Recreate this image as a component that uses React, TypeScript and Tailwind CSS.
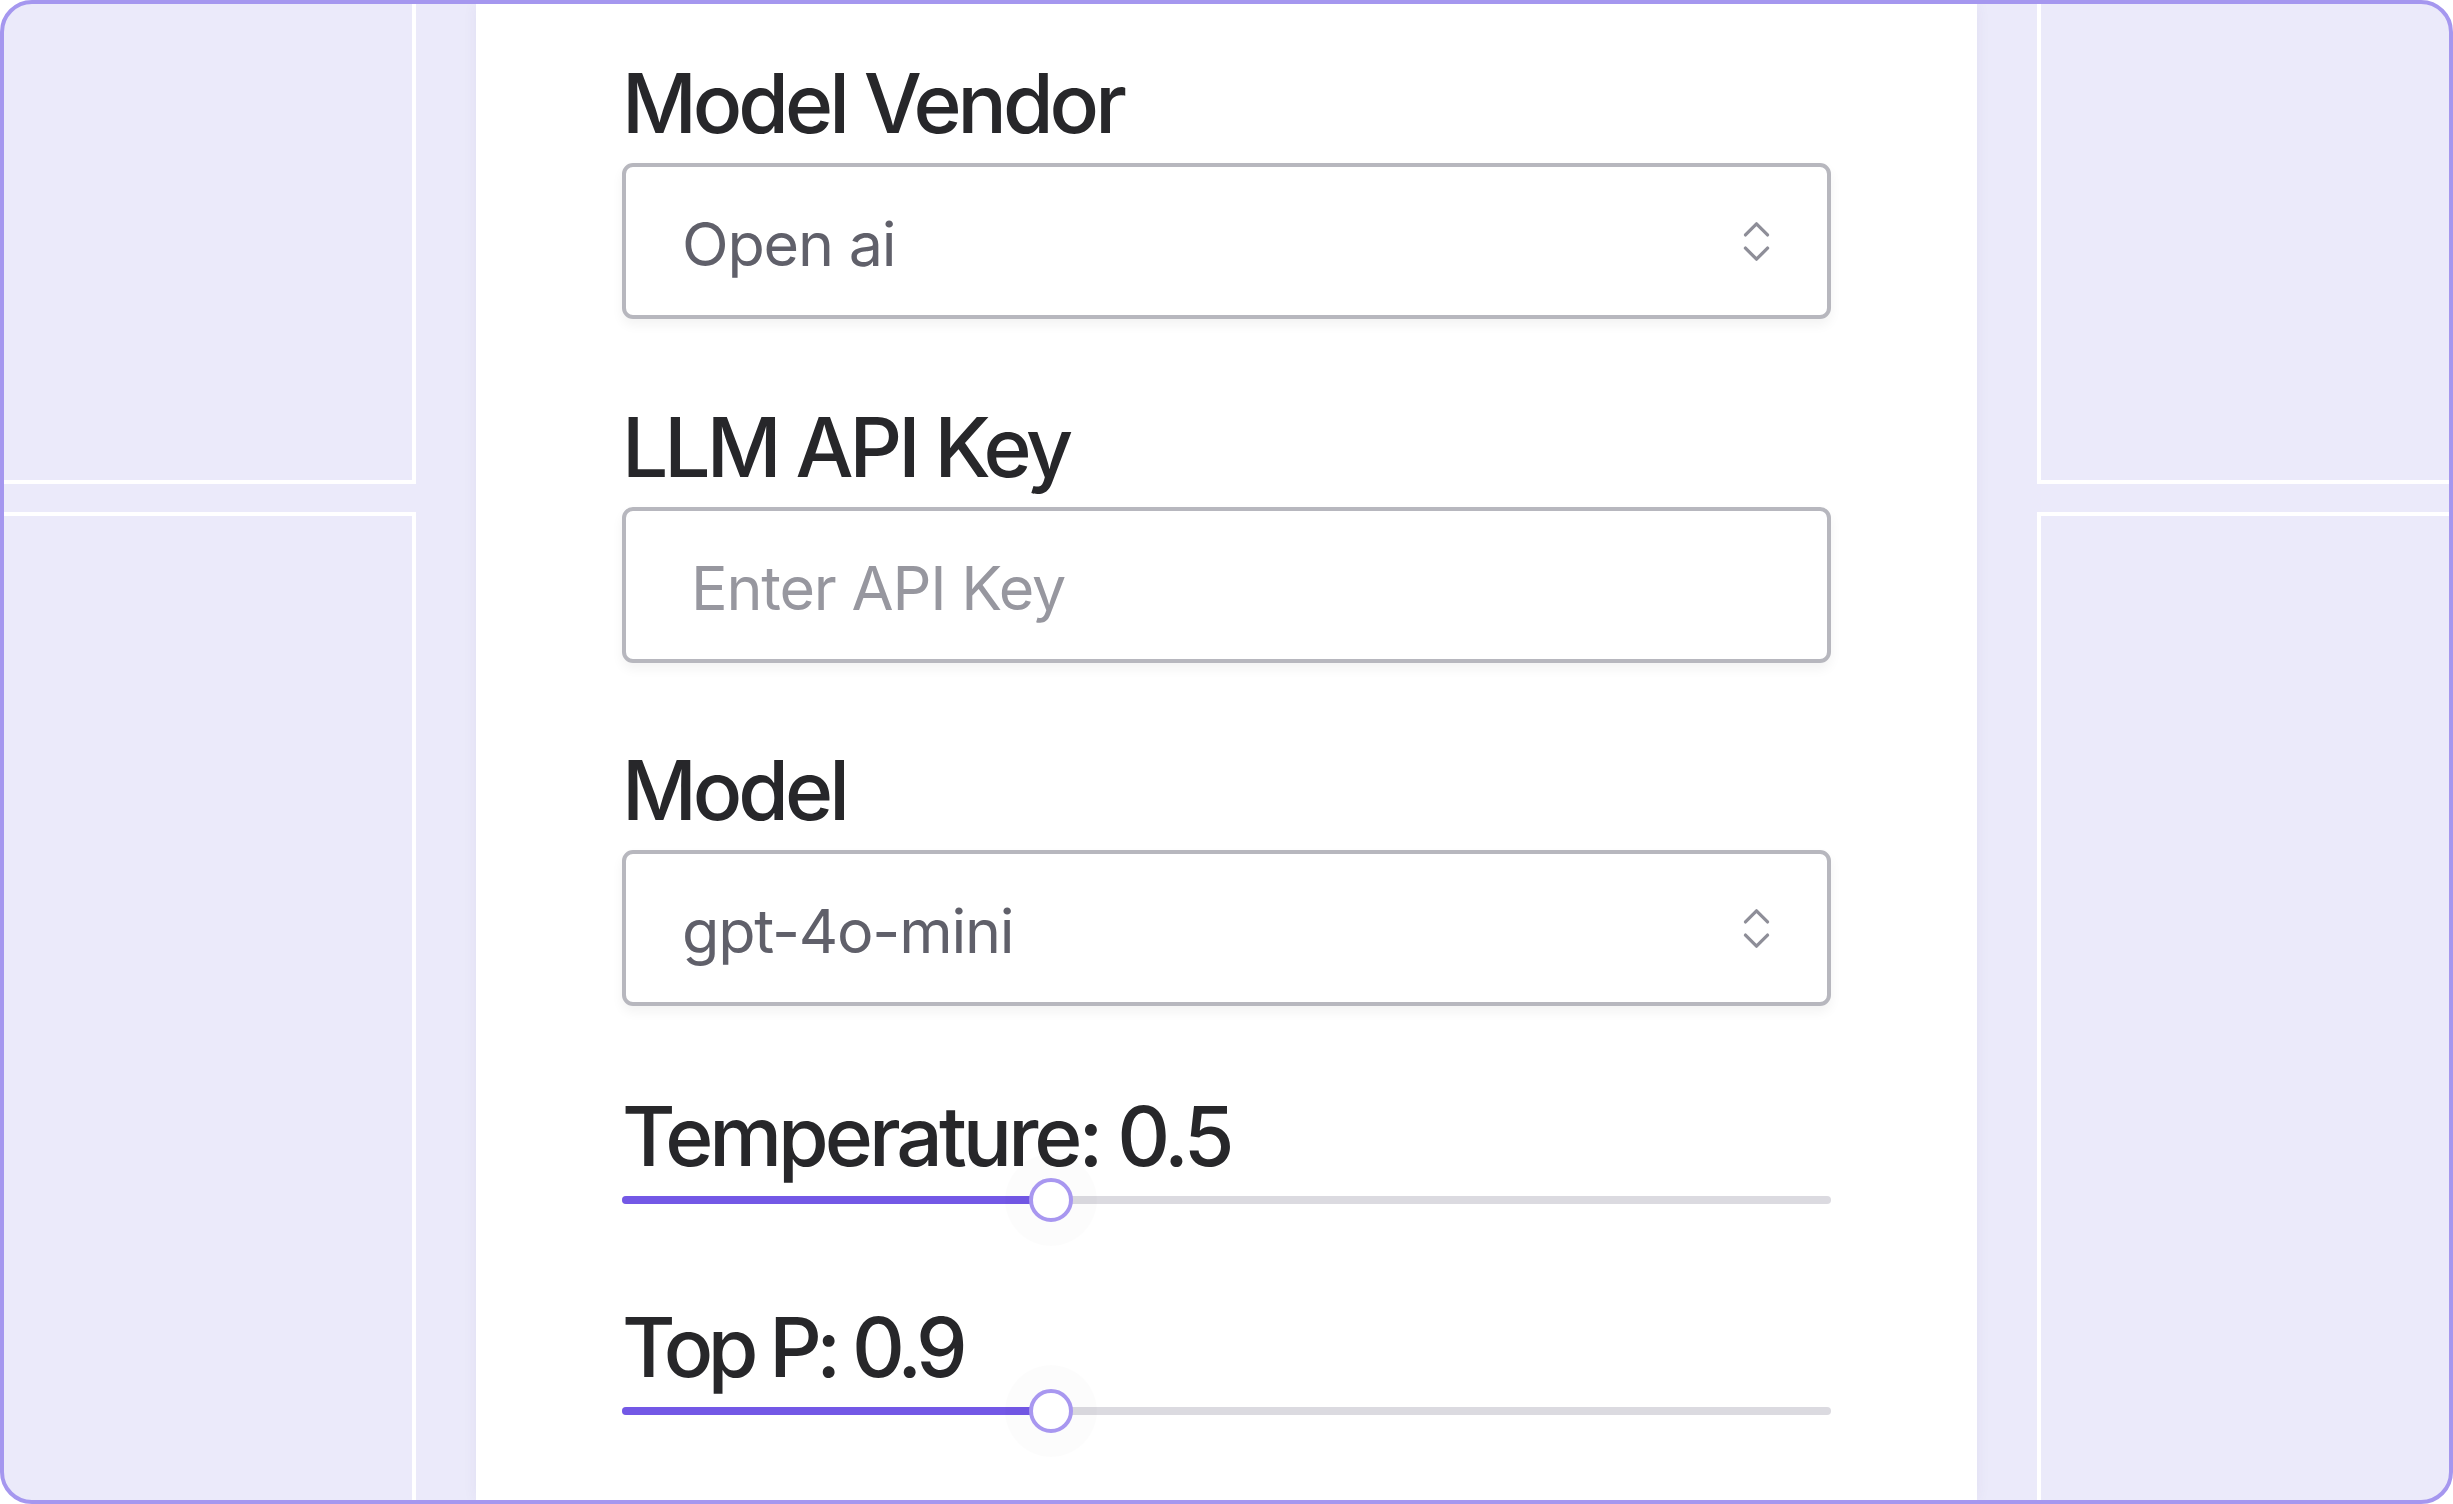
import React from "react";
import { ChevronsUpDown } from "lucide-react";

function Label({ children, tight }: { children: React.ReactNode; tight?: boolean }) {
  return (
    <div
      className={
        tight
          ? "text-[82px] leading-none font-medium text-[#27272a] tracking-[-5.5px] whitespace-nowrap"
          : "text-[82px] leading-none font-medium text-[#27272a] tracking-[-4px] whitespace-nowrap"
      }
    >
      {children}
    </div>
  );
}

function SelectBox({ value }: { value: string }) {
  return (
    <div className="mt-[18px] h-[156px] w-full rounded-[11px] border-[4px] border-[#b7b7be] bg-white shadow-[0_6px_12px_rgba(0,0,0,0.05)] flex items-center justify-between pl-[56px] pr-[44px]">
      <span className="pt-[6px] text-[61px] leading-none text-[#60606a] tracking-[-1.2px]">{value}</span>
      <ChevronsUpDown size={53} strokeWidth={1.5} className="text-[#8e8e98]" />
    </div>
  );
}

function InputBox({ placeholder }: { placeholder: string }) {
  return (
    <div className="mt-[18px] h-[156px] w-full rounded-[11px] border-[4px] border-[#b7b7be] bg-white shadow-[0_6px_12px_rgba(0,0,0,0.05)] flex items-center pl-[65px] pt-[6px]">
      <input
        className="w-full bg-transparent outline-none text-[61px] leading-none tracking-[-1.2px] text-[#60606a] placeholder:text-[#97979f]"
        placeholder={placeholder}
      />
    </div>
  );
}

function Slider({ filled }: { filled: number }) {
  return (
    <div className="relative h-[44px] w-full flex items-center">
      <div className="h-[8px] w-full rounded-full bg-[#dbdae0]" />
      <div
        className="absolute left-0 top-[18px] h-[8px] rounded-l-full bg-[#7358e6]"
        style={{ width: filled }}
      />
      <div
        className="absolute top-0 h-[44px] w-[44px] rounded-full border-[4px] border-[#a897f0] bg-white shadow-[0_0_0_24px_rgba(0,0,0,0.012)]"
        style={{ left: filled - 22 }}
      />
    </div>
  );
}

export default function App() {
  return (
    <div className="w-[2453px] h-[1504px] bg-white font-['Inter',sans-serif]">
      <div className="w-full h-full rounded-[32px] border-[4px] border-[#a597ef] bg-[#ebeafa] overflow-hidden flex gap-[60px]">
        <div className="flex-1 flex">
          <div className="flex-1 flex flex-col gap-[28px] -mt-[24px] -ml-[24px]">
            <div className="h-[504px] shrink-0 border-[4px] border-white" />
            <div className="flex-1 -mb-[40px] border-[4px] border-white" />
          </div>
        </div>
        <div className="w-[1501px] shrink-0 bg-white shadow-[0_0_14px_rgba(60,50,120,0.06)] pt-[59px]">
          <div className="w-[1209px] mx-auto flex flex-col">
            <div>
              <Label>Model Vendor</Label>
              <SelectBox value="Open ai" />
            </div>
            <div className="mt-[88px]">
              <Label>LLM API Key</Label>
              <InputBox placeholder="Enter API Key" />
            </div>
            <div className="mt-[87px]">
              <Label>Model</Label>
              <SelectBox value="gpt-4o-mini" />
            </div>
            <div className="mt-[90px]">
              <Label>Temperature: 0.5</Label>
              <Slider filled={429} />
            </div>
            <div className="mt-[85px]">
              <Label tight>Top P: 0.9</Label>
              <Slider filled={429} />
            </div>
          </div>
        </div>
        <div className="flex-1 flex">
          <div className="flex-1 flex flex-col gap-[28px] -mt-[24px] -mr-[24px]">
            <div className="h-[504px] shrink-0 border-[4px] border-white" />
            <div className="flex-1 -mb-[40px] border-[4px] border-white" />
          </div>
        </div>
      </div>
    </div>
  );
}
